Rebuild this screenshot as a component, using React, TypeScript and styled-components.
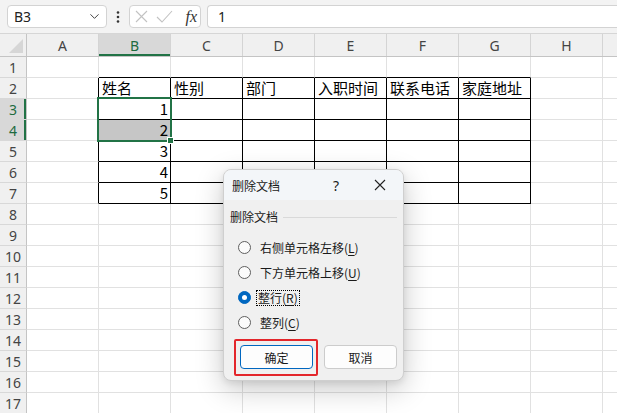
import React from "react";
import styled, { createGlobalStyle } from "styled-components";
import { ChevronDown } from "lucide-react";

const GlobalStyle = createGlobalStyle`
  html, body {
    margin: 0;
    padding: 0;
    background: #fff;
  }
  body {
    font-family: "Noto Sans", "Noto Sans CJK SC", sans-serif;
    width: 617px;
    height: 413px;
    overflow: hidden;
  }
`;

const GREEN = "#217346";

const Page = styled.div`
  position: relative;
  width: 617px;
  height: 413px;
  overflow: hidden;
  background: #fff;
`;

const FormulaBar = styled.div`
  height: 34px;
  box-sizing: border-box;
  display: flex;
  align-items: center;
  padding-left: 7px;
  background: #f3f3f3;
  border-bottom: 1px solid #d6d6d6;
`;

const NameBox = styled.div`
  width: 100px;
  height: 23px;
  box-sizing: border-box;
  background: #fff;
  border: 1px solid #d3d3d3;
  border-radius: 4px;
  display: flex;
  align-items: center;
  justify-content: space-between;
  padding: 0 4px 0 6px;
  font-size: 14px;
  color: #222;
`;

const Dots = styled.div`
  width: 22px;
  display: flex;
  justify-content: center;
`;

const FxBox = styled.div`
  width: 72px;
  height: 23px;
  box-sizing: border-box;
  background: #fff;
  border: 1px solid #d3d3d3;
  border-radius: 4px;
  display: flex;
  align-items: center;
  padding: 0 3px 0 5px;
  gap: 8px;
`;

const Fx = styled.span`
  font-family: "Liberation Serif", "DejaVu Serif", serif;
  font-style: italic;
  font-size: 16px;
  color: #333;
  margin-left: auto;
`;

const FormulaInput = styled.div`
  flex: 1;
  height: 23px;
  margin-left: 6px;
  box-sizing: border-box;
  background: #fff;
  border: 1px solid #d3d3d3;
  border-right: none;
  border-radius: 4px 0 0 4px;
  display: flex;
  align-items: center;
  padding-left: 10px;
  font-size: 14px;
  color: #222;
`;

const Sheet = styled.div`
  position: relative;
`;

const HeaderRow = styled.div`
  display: flex;
  height: 23px;
  box-sizing: border-box;
  background: #f0f0f0;
  border-bottom: 1px solid #c4c4c4;
`;

const Corner = styled.div`
  width: 27px;
  flex: none;
  box-sizing: border-box;
  border-right: 1px solid #c4c4c4;
  display: flex;
  align-items: flex-end;
  justify-content: flex-end;
  padding: 0 3px 3px 0;
`;

const ColHead = styled.div<{ $active?: boolean }>`
  width: 72px;
  flex: none;
  box-sizing: border-box;
  border-right: 1px solid #d4d4d4;
  display: flex;
  align-items: center;
  justify-content: center;
  font-size: 14px;
  color: ${(p) => (p.$active ? "#1d6b3f" : "#444")};
  background: ${(p) => (p.$active ? "#d8d8d8" : "transparent")};
  box-shadow: ${(p) => (p.$active ? `inset 0 -2px 0 ${GREEN}` : "none")};
`;

const Row = styled.div`
  display: flex;
  height: 21px;
`;

const RowHead = styled.div<{ $active?: boolean }>`
  width: 27px;
  flex: none;
  box-sizing: border-box;
  border-right: 1px solid #c4c4c4;
  border-bottom: 1px solid #d8d8d8;
  display: flex;
  align-items: center;
  justify-content: center;
  font-size: 14px;
  color: ${(p) => (p.$active ? "#1d6b3f" : "#444")};
  background: ${(p) => (p.$active ? "#d8d8d8" : "#f0f0f0")};
  box-shadow: ${(p) => (p.$active ? `inset -2px 0 0 ${GREEN}` : "none")};
`;

const Cell = styled.div<{
  $right?: boolean;
  $bottom?: boolean;
  $num?: boolean;
  $shade?: boolean;
}>`
  width: 72px;
  height: 21px;
  flex: none;
  box-sizing: border-box;
  border-right: 1px solid ${(p) => (p.$right ? "#000" : "#e1e1e1")};
  border-bottom: 1px solid ${(p) => (p.$bottom ? "#000" : "#e1e1e1")};
  background: ${(p) => (p.$shade ? "#c6c6c6" : "transparent")};
  display: flex;
  align-items: flex-end;
  justify-content: ${(p) => (p.$num ? "flex-end" : "flex-start")};
  padding: ${(p) => (p.$num ? "0 2px 1px 0" : "0 0 1px 3px")};
  font-family: "Noto Sans CJK SC", "Noto Sans", sans-serif;
  font-size: 15px;
  line-height: 18px;
  color: #000;
  white-space: nowrap;
  overflow: hidden;
`;

const Selection = styled.div`
  position: absolute;
  left: 97px;
  top: 63px;
  width: 75px;
  height: 45px;
  box-sizing: border-box;
  border: 2px solid ${GREEN};
  pointer-events: none;
`;

const FillHandle = styled.div`
  position: absolute;
  right: -4px;
  bottom: -4px;
  width: 5px;
  height: 5px;
  background: ${GREEN};
  border: 1px solid #fff;
`;

const Dialog = styled.div`
  position: absolute;
  left: 223px;
  top: 169px;
  width: 181px;
  height: 212px;
  box-sizing: border-box;
  border: 1px solid #cfcfcf;
  border-radius: 8px;
  overflow: hidden;
  background: #f0f0f0;
  box-shadow: 0 8px 28px rgba(0, 0, 0, 0.22), 0 2px 6px rgba(0, 0, 0, 0.08);
  font-family: "Noto Sans CJK SC", "Noto Sans", sans-serif;
  font-size: 12px;
  color: #1a1a1a;
`;

const TitleBar = styled.div`
  height: 30px;
  display: flex;
  align-items: center;
  padding: 0 9px 0 8px;
  background: #f3f6f9;
`;

const Title = styled.div`
  flex: 1;
`;

const TitleButton = styled.div`
  width: 28px;
  height: 28px;
  display: flex;
  align-items: center;
  justify-content: center;
  font-family: "Noto Sans", sans-serif;
  font-size: 14px;
  & + & {
    margin-left: 16px;
  }
`;

const Body = styled.div`
  padding: 9px 6px 11px 6px;
`;

const GroupLabel = styled.div`
  display: flex;
  align-items: center;
  gap: 5px;
  height: 16px;
  line-height: 16px;
  margin-bottom: 10px;
`;

const GroupLine = styled.div`
  flex: 1;
  height: 1px;
  background: #d9d9d9;
`;

const Option = styled.div`
  height: 25px;
  display: flex;
  align-items: center;
  padding-left: 8px;
  gap: 7px;
`;

const Radio = styled.span<{ $checked?: boolean }>`
  width: 13px;
  height: 13px;
  box-sizing: border-box;
  border-radius: 50%;
  flex: none;
  background: ${(p) => (p.$checked ? "#0067c0" : "#fbfbfb")};
  border: 1px solid ${(p) => (p.$checked ? "#0067c0" : "#5f5f5f")};
  display: flex;
  align-items: center;
  justify-content: center;
  &::after {
    content: "";
    display: ${(p) => (p.$checked ? "block" : "none")};
    width: 5px;
    height: 5px;
    border-radius: 50%;
    background: #fff;
  }
`;

const OptionText = styled.span<{ $focus?: boolean }>`
  line-height: 14px;
  padding: 0 1px;
  margin-left: ${(p) => (p.$focus ? "-2px" : "0")};
  border: 1px dotted ${(p) => (p.$focus ? "#000" : "transparent")};
  u {
    text-underline-offset: 2px;
  }
`;

const Buttons = styled.div`
  display: flex;
  justify-content: flex-end;
  gap: 11px;
  margin-top: 10px;
`;

const Highlight = styled.div`
  position: relative;
  &::after {
    content: "";
    position: absolute;
    left: -6px;
    right: -5px;
    top: -6px;
    bottom: -7px;
    border: 2px solid #e3262b;
    border-radius: 2px;
  }
`;

const Button = styled.div<{ $primary?: boolean }>`
  width: 73px;
  height: 24px;
  box-sizing: border-box;
  background: #fdfdfd;
  border: 1px solid ${(p) => (p.$primary ? "#0067c0" : "#cccccc")};
  border-radius: 4px;
  display: flex;
  align-items: center;
  justify-content: center;
  font-size: 12px;
`;

const columns = ["A", "B", "C", "D", "E", "F", "G", "H", ""];
const header = ["姓名", "性别", "部门", "入职时间", "联系电话", "家庭地址"];

function cellText(r: number, c: number): string {
  if (r === 2 && c >= 1 && c <= 6) return header[c - 1];
  if (r >= 3 && r <= 7 && c === 1) return String(r - 2);
  return "";
}

const options = [
  { label: "右侧单元格左移", key: "L" },
  { label: "下方单元格上移", key: "U" },
  { label: "整行", key: "R", checked: true },
  { label: "整列", key: "C" },
];

export default function App() {
  const rows = Array.from({ length: 17 }, (_, i) => i + 1);
  return (
    <Page>
      <GlobalStyle />
      <FormulaBar>
        <NameBox>
          <span>B3</span>
          <ChevronDown size={15} strokeWidth={1.6} color="#444" />
        </NameBox>
        <Dots>
          <svg width="4" height="14" viewBox="0 0 4 14">
            <circle cx="2" cy="2.5" r="1.3" fill="#333" />
            <circle cx="2" cy="7" r="1.3" fill="#333" />
            <circle cx="2" cy="11.5" r="1.3" fill="#333" />
          </svg>
        </Dots>
        <FxBox>
          <svg width="13" height="13" viewBox="0 0 13 13">
            <path d="M1 1 L12 12 M12 1 L1 12" stroke="#c2c2c2" strokeWidth="1.1" />
          </svg>
          <svg width="17" height="13" viewBox="0 0 17 13">
            <path d="M1 7 L6 12 L16 1" stroke="#c2c2c2" strokeWidth="1.1" fill="none" />
          </svg>
          <Fx>fx</Fx>
        </FxBox>
        <FormulaInput>1</FormulaInput>
      </FormulaBar>

      <Sheet>
        <HeaderRow>
          <Corner>
            <svg width="14" height="14" viewBox="0 0 14 14">
              <path d="M14 0 L14 14 L0 14 Z" fill="#d6d6d6" />
            </svg>
          </Corner>
          {columns.map((c, i) => (
            <ColHead key={i} $active={c === "B"}>
              {c}
            </ColHead>
          ))}
        </HeaderRow>
        {rows.map((r) => (
          <Row key={r}>
            <RowHead $active={r === 3 || r === 4}>{r}</RowHead>
            {columns.map((c, ci) => (
              <Cell
                key={ci}
                $right={r >= 2 && r <= 7 && ci <= 6}
                $bottom={r >= 1 && r <= 7 && ci >= 1 && ci <= 6}
                $num={r >= 3 && ci === 1}
                $shade={r === 4 && ci === 1}
              >
                {cellText(r, ci)}
              </Cell>
            ))}
          </Row>
        ))}
        <Selection>
          <FillHandle />
        </Selection>
      </Sheet>

      <Dialog>
        <TitleBar>
          <Title>删除文档</Title>
          <TitleButton>?</TitleButton>
          <TitleButton>
            <svg width="12" height="12" viewBox="0 0 12 12">
              <path d="M1 1 L11 11 M11 1 L1 11" stroke="#222" strokeWidth="1.1" />
            </svg>
          </TitleButton>
        </TitleBar>
        <Body>
          <GroupLabel>
            删除文档
            <GroupLine />
          </GroupLabel>
          {options.map((o) => (
            <Option key={o.key}>
              <Radio $checked={o.checked} />
              <OptionText $focus={o.checked}>
                {o.label}(<u>{o.key}</u>)
              </OptionText>
            </Option>
          ))}
          <Buttons>
            <Highlight>
              <Button $primary>确定</Button>
            </Highlight>
            <Button>取消</Button>
          </Buttons>
        </Body>
      </Dialog>
    </Page>
  );
}
